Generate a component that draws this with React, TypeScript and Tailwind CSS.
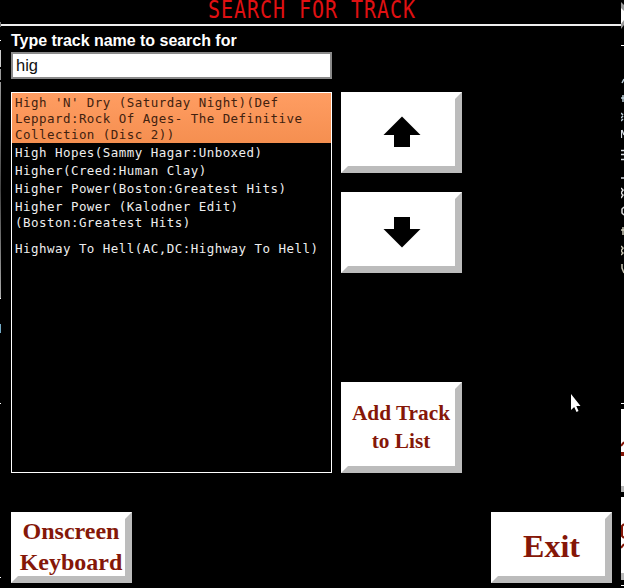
import { useState, type ReactNode } from "react";

type Track = { lines: string[]; className: string };

const tracks: Track[] = [
  {
    lines: ["High 'N' Dry (Saturday Night)(Def", "Leppard:Rock Of Ages- The Definitive", "Collection (Disc 2))"],
    className: "h-[50px] pt-[2px] bg-linear-to-b from-[#ff9d62] to-[#f58f50] text-[#41210f]",
  },
  { lines: ["High Hopes(Sammy Hagar:Unboxed)"], className: "h-[18px] pt-[2px]" },
  { lines: ["Higher(Creed:Human Clay)"], className: "h-[18px] pt-[2px]" },
  { lines: ["Higher Power(Boston:Greatest Hits)"], className: "h-[18px] pt-[2px]" },
  { lines: ["Higher Power (Kalodner Edit)", "(Boston:Greatest Hits)"], className: "h-[42px] pt-[2px]" },
  { lines: ["Highway To Hell(AC,DC:Highway To Hell)"], className: "h-[18px] pt-[2px]" },
];

function BevelButton({ className, children }: { className: string; children: ReactNode }) {
  return (
    <button
      className={
        "flex w-[121px] shrink-0 items-center justify-center border-[7px] border-t-white border-l-white border-r-[#bcbcbc] border-b-[#bcbcbc] bg-white text-center font-['Liberation_Serif',serif] font-bold whitespace-nowrap text-[#851708] " +
        className
      }
    >
      {children}
    </button>
  );
}

function Arrow({ down = false }: { down?: boolean }) {
  return (
    <svg width="38" height="32" viewBox="0 0 38 32" className={down ? "mb-[1px] rotate-180" : "mb-[1px]"}>
      <path d="M19 0.5 L37.5 19 H27 V31 H11 V19 H0.5 Z" fill="black" />
    </svg>
  );
}

function LeftEdge() {
  return (
    <div className="flex w-px shrink-0 flex-col">
      <div className="h-[22px]" />
      <div className="h-[5px] bg-[#777]" />
      <div className="mt-[13px] h-px bg-white" />
      <div className="mt-[9px] h-[17px] bg-[#ccc]" />
      <div className="mt-[2px] h-[11px] bg-[#999]" />
      <div className="mt-[2px] h-[216px] bg-linear-to-b from-[#999] via-[#444] to-[#aaa]" />
      <div className="h-px bg-white" />
      <div className="mt-[25px] h-[9px] bg-[#72a9c5]" />
      <div className="mt-[70px] h-px bg-white" />
      <div className="mt-[173px] h-px bg-white" />
    </div>
  );
}

function RightEdge() {
  return (
    <div className="flex w-[3px] shrink-0 flex-col overflow-hidden">
      <svg width="3" height="409" viewBox="0 0 3 409" className="shrink-0" fill="none">
        <path d="M0 2 L3 5 V25 L0 29 Z" fill="#999" />
        <path d="M0 8 L3 11 V20 L0 24 Z" fill="#fff" />
        <path d="M0 45.5 H3 M0 403.5 H3" stroke="#fff" />
        <path d="M3 79 L1 83 M0 98 H3 M2 95 V102 M0 113 L2 115 M0 118 L2 116 M0 121 L2 119" stroke="#b9cbd5" strokeWidth="1.5" />
        <path d="M0.5 130 V138 M1 130 L3 135 M0 150.5 H3 M0 154.5 H3 M0 159.5 H3 M0 178 H3" stroke="#d6dce3" strokeWidth="1.3" />
        <path d="M0 188 L2 190 L0 193 L2 195 L0 198 M3 207 L1 209 V213 L3 215" stroke="#dedede" strokeWidth="1.5" />
        <path d="M0 230 H3 M2 227 V235 M0 246 L2 248 L0 251 L2 253 L0 255 M1 264 V268 L3 273" stroke="#cac7b5" strokeWidth="1.5" />
      </svg>
      <div className="flex h-[83px] shrink-0 flex-col border-b-[6px] border-[#bcbcbc] bg-white">
        <svg width="3" height="77" fill="none">
          <path d="M0 37 L3 33" stroke="#851708" strokeWidth="2" />
          <path d="M0 45 H3" stroke="#851708" strokeWidth="4" />
        </svg>
      </div>
      <div className="mt-[5px] flex h-[83px] shrink-0 flex-col border-b-[7px] border-[#bcbcbc] bg-white">
        <svg width="3" height="76" fill="none">
          <path d="M3 27 L1 29 V39 L3 41 M0 51 L3 47" stroke="#851708" strokeWidth="2" />
        </svg>
      </div>
      <div className="mt-[5px] h-px bg-white" />
    </div>
  );
}

function MousePointer() {
  return (
    <svg className="absolute top-[392px] left-[569px]" width="13" height="21" viewBox="0 0 13 21">
      <path d="M2 2 V18 L5.2 15 L7.5 20 L9.5 19 L7.3 14 H11.5 Z" fill="white" />
    </svg>
  );
}

export default function App() {
  const [query, setQuery] = useState("hig");

  return (
    <div className="relative flex h-[588px] w-[624px] overflow-hidden bg-black font-['Liberation_Sans',sans-serif] text-white">
      <LeftEdge />
      <main className="flex w-[620px] shrink-0 flex-col">
        <header className="flex h-[26px] shrink-0 items-end justify-center border-b-2 border-[#eee]">
          <h1 className="mb-[2px] origin-bottom scale-y-[1.25] pl-[2px] font-['DejaVu_Sans_Mono',monospace] text-[20px] leading-[20px] tracking-[0.96px] whitespace-pre text-[#e01012]">
            SEARCH FOR TRACK
          </h1>
        </header>
        <div className="flex flex-col pl-[10px]">
          <label htmlFor="track" className="mt-[5px] h-[21px] text-[16px] leading-[20px] font-bold tracking-[-0.03px]">
            Type track name to search for
          </label>
          <input
            id="track"
            value={query}
            onChange={(e) => setQuery(e.target.value)}
            className="h-[27px] w-[321px] border-2 border-[#8a8a8a] bg-white px-[3px] text-[16.5px] text-[#111]"
          />
          <div className="mt-[13px] flex gap-[9px]">
            <ul className="h-[381px] w-[321px] border border-white font-['DejaVu_Sans_Mono',monospace] text-[12.5px] leading-[16px] tracking-[0.46px] text-[#eee]">
              {tracks.map((track) => (
                <li key={track.lines.join("")} className={"pl-[3px] whitespace-pre " + track.className}>
                  {track.lines.map((line) => (
                    <div key={line}>{line}</div>
                  ))}
                </li>
              ))}
            </ul>
            <div className="flex flex-col">
              <BevelButton className="h-[81px]">
                <Arrow />
              </BevelButton>
              <BevelButton className="mt-[19px] h-[81px]">
                <Arrow down />
              </BevelButton>
              <BevelButton className="mt-auto h-[91px] pr-[1px] pb-[2px] text-[21.3px] leading-[28px]">
                <span>
                  Add Track
                  <br />
                  to List
                </span>
              </BevelButton>
            </div>
          </div>
          <div className="mt-[39px] flex justify-between pr-[9px]">
            <BevelButton className="h-[71px] pr-[1px] pb-[2px] text-[24px] leading-[31px]">
              <span>
                Onscreen
                <br />
                Keyboard
              </span>
            </BevelButton>
            <BevelButton className="h-[71px] pb-[4px] text-[32px] leading-[36px]">Exit</BevelButton>
          </div>
        </div>
      </main>
      <RightEdge />
      <MousePointer />
    </div>
  );
}
